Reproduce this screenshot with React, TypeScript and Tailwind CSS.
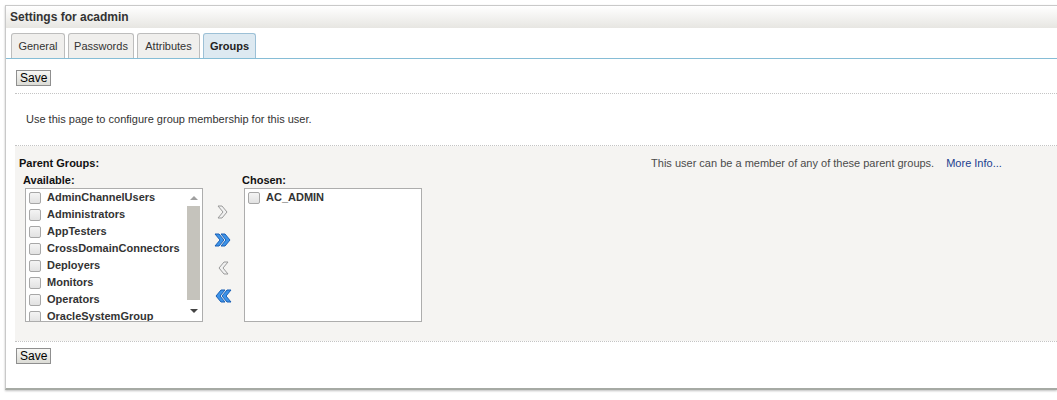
import { Fragment } from 'react'

const available = [
  'AdminChannelUsers',
  'Administrators',
  'AppTesters',
  'CrossDomainConnectors',
  'Deployers',
  'Monitors',
  'Operators',
  'OracleSystemGroup',
]

const tabs = [
  { label: 'General', w: 'w-[54px]' },
  { label: 'Passwords', w: 'w-[66px]' },
  { label: 'Attributes', w: 'w-[63px]' },
  { label: 'Groups', w: 'w-[53px]', active: true },
]

function Checkbox() {
  return (
    <span className="inline-block w-[12px] h-[12px] shrink-0 rounded-[2px] border border-[#a7a7a7] bg-gradient-to-b from-[#f4f4f4] to-[#e2e2e2]" />
  )
}

function Chevron({ dir, double }: { dir: 'left' | 'right'; double?: boolean }) {
  const fill = double ? '#3d94ea' : '#f1f1f1'
  const stroke = double ? '#1a5fb4' : '#9a9a9a'
  const one = '1,1 5,1 10,7 5,13 1,13 6,7'
  return (
    <svg width="18" height="15" viewBox="0 0 18 15" className={dir === 'left' ? '-scale-x-100' : ''}>
      {double ? (
        <Fragment>
          <polygon points={one} fill={fill} stroke={stroke} strokeWidth="1" strokeLinejoin="round" />
          <polygon points={one} transform="translate(6,0)" fill={fill} stroke={stroke} strokeWidth="1" strokeLinejoin="round" />
        </Fragment>
      ) : (
        <polygon points={one} transform="translate(3,0)" fill={fill} stroke={stroke} strokeWidth="1" strokeLinejoin="round" />
      )}
    </svg>
  )
}

function SaveButton() {
  return (
    <button className="h-[16px] px-[3px] border border-[#8f8f8f] bg-gradient-to-b from-[#f7f7f5] to-[#dcdcd6] text-[12px] leading-[14px] text-black font-['Liberation_Sans',Arial,sans-serif]">
      Save
    </button>
  )
}

export default function App() {
  return (
    <div className="w-[1057px] h-[400px] bg-white pl-[5px] pt-[5px] overflow-hidden font-['Liberation_Sans',Arial,sans-serif] text-[#333]">
      <div className="h-[385px] border-t border-l border-[#c9c9c9] border-b-2 border-b-[#a6aaa4] shadow-[0_1px_2px_rgba(0,0,0,0.25)] flex flex-col">
        {/* Header */}
        <div className="h-[22px] bg-gradient-to-b from-white to-[#e7e6e2] pl-[4px] text-[12px] font-bold leading-[22px] text-[#333]">
          Settings for acadmin
        </div>

        {/* Tabs */}
        <div className="mt-[5px] flex items-end gap-[3px] pl-[5px] border-b border-[#86bdd6] h-[26px]">
          {tabs.map((t) => (
            <div
              key={t.label}
              className={`${t.w} h-[25px] flex items-center justify-center rounded-t-[3px] border border-b-0 text-[11px] ${
                t.active
                  ? 'bg-[#dde9f1] border-[#9cc0d6] font-bold text-[#222]'
                  : 'bg-[#f0efed] border-[#bdbdbd] text-[#333]'
              }`}
            >
              {t.label}
            </div>
          ))}
        </div>

        {/* Content */}
        <div className="pl-[9px] flex flex-col">
          <div className="flex pt-[11px] pl-[1px] pb-[7px]">
            <SaveButton />
          </div>
          <div className="border-t border-dotted border-[#c4c4c4]" />
          <div className="h-[51px] flex items-center pl-[11px] text-[11px] text-[#333]">
            Use this page to configure group membership for this user.
          </div>
          <div className="border-t border-dotted border-[#c4c4c4]" />

          {/* Parent groups */}
          <div className="bg-[#f5f4f2] h-[195px] pl-[4px] pt-[10px]">
            <div className="flex items-center h-[14px]">
              <span className="text-[11px] font-bold text-[#111]">Parent Groups:</span>
              <span className="ml-[552px] text-[11px] text-[#4b4b4b]">
                This user can be a member of any of these parent groups.
              </span>
              <span className="ml-[12px] text-[11px] text-[#21408f]">More Info...</span>
            </div>

            <div className="flex mt-[3px]">
              {/* Available */}
              <div className="pl-[4px]">
                <div className="text-[11px] font-bold text-[#111] leading-[14px]">Available:</div>
                <div className="ml-[2px] mt-[1px] w-[178px] h-[134px] border border-[#adadad] bg-white flex overflow-hidden">
                  <div className="flex-1 pl-[3px] flex flex-col">
                    {available.map((g) => (
                      <div key={g} className="h-[17px] flex items-center gap-[6px] shrink-0">
                        <Checkbox />
                        <span className="text-[11px] font-bold text-[#333] whitespace-nowrap">{g}</span>
                      </div>
                    ))}
                  </div>
                  <div className="w-[15px] mr-[1px] flex flex-col items-center bg-white">
                    <div className="h-[17px] flex items-center justify-center">
                      <span className="w-0 h-0 border-x-[4px] border-x-transparent border-b-[4px] border-b-[#a0a0a0]" />
                    </div>
                    <div className="w-[13px] h-[94px] bg-[#c5c3bc]" />
                    <div className="flex-1 flex items-center justify-center">
                      <span className="w-0 h-0 border-x-[4px] border-x-transparent border-t-[4px] border-t-[#444]" />
                    </div>
                  </div>
                </div>
              </div>

              {/* Move buttons */}
              <div className="w-[39px] pt-[32px] flex flex-col items-center gap-[13px]">
                <Chevron dir="right" />
                <Chevron dir="right" double />
                <Chevron dir="left" />
                <Chevron dir="left" double />
              </div>

              {/* Chosen */}
              <div>
                <div className="text-[11px] font-bold text-[#111] leading-[14px]">Chosen:</div>
                <div className="ml-[2px] mt-[1px] w-[178px] h-[134px] border border-[#adadad] bg-white pl-[3px]">
                  <div className="h-[17px] flex items-center gap-[6px]">
                    <Checkbox />
                    <span className="text-[11px] font-bold text-[#333]">AC_ADMIN</span>
                  </div>
                </div>
              </div>
            </div>
          </div>
          <div className="border-t border-dotted border-[#c4c4c4]" />
          <div className="flex pt-[6px] pl-[1px]">
            <SaveButton />
          </div>
        </div>
      </div>
    </div>
  )
}
